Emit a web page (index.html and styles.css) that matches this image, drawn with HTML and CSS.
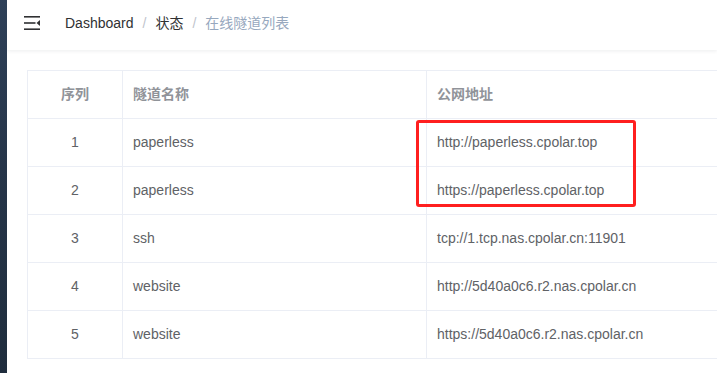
FILE: index.html
```html
<!DOCTYPE html>
<html lang="zh-CN">
<head>
  <meta charset="UTF-8">
  <meta name="viewport" content="width=device-width, initial-scale=1.0">
  <title>在线隧道列表</title>
  <link rel="stylesheet" href="styles.css">
</head>
<body>
  <div class="app">
    <div class="sidebar"></div>

    <div class="main">
      <div class="navbar">
        <div class="hamburger">
          <svg width="16" height="14" viewBox="0 0 16 14">
            <rect x="0" y="0" width="16" height="1.6" fill="#303133"/>
            <rect x="0" y="6.2" width="11.5" height="1.6" fill="#303133"/>
            <polygon points="16,4 12.5,7 16,10" fill="#303133"/>
            <rect x="0" y="12.4" width="16" height="1.6" fill="#303133"/>
          </svg>
        </div>
        <div class="breadcrumb">
          <span class="crumb">Dashboard</span>
          <span class="sep">/</span>
          <span class="crumb">状态</span>
          <span class="sep">/</span>
          <span class="crumb current">在线隧道列表</span>
        </div>
      </div>

      <div class="content">
        <div class="table-wrap">
          <table class="tunnels">
            <thead>
              <tr>
                <th class="col-index">序列</th>
                <th class="col-name">隧道名称</th>
                <th class="col-url">公网地址</th>
              </tr>
            </thead>
            <tbody>
              <tr>
                <td class="col-index">1</td>
                <td>paperless</td>
                <td>http://paperless.cpolar.top</td>
              </tr>
              <tr>
                <td class="col-index">2</td>
                <td>paperless</td>
                <td>https://paperless.cpolar.top</td>
              </tr>
              <tr>
                <td class="col-index">3</td>
                <td>ssh</td>
                <td>tcp://1.tcp.nas.cpolar.cn:11901</td>
              </tr>
              <tr>
                <td class="col-index">4</td>
                <td>website</td>
                <td>http://5d40a0c6.r2.nas.cpolar.cn</td>
              </tr>
              <tr>
                <td class="col-index">5</td>
                <td>website</td>
                <td>https://5d40a0c6.r2.nas.cpolar.cn</td>
              </tr>
            </tbody>
          </table>
          <!-- annotation box drawn over the first two addresses -->
          <div class="highlight"></div>
        </div>
      </div>
    </div>
  </div>
</body>
</html>
```

FILE: styles.css
```css
html, body {
  margin: 0;
  height: 100%;
  overflow: hidden;
}

body {
  font-family: "Liberation Sans", Arial, "Noto Sans CJK SC", sans-serif;
  font-size: 14px;
  color: #606266;
  background: #fff;
}

.app {
  display: flex;
  height: 100%;
}

.sidebar {
  width: 7px;
  flex-shrink: 0;
  background: linear-gradient(to bottom, #2e4058 0%, #263549 45%, #1f2d3d 100%);
}

.main {
  flex: 1;
  min-width: 0;
  overflow: hidden;
}

/* top bar */
.navbar {
  height: 50px;
  display: flex;
  align-items: center;
  background: #fff;
  box-shadow: 0 1px 4px rgba(0, 21, 41, 0.08);
}

.hamburger {
  padding-left: 17px;
  height: 46px;
  display: flex;
  align-items: center;
  margin-top: -4px;
}

.hamburger svg {
  display: block;
}

.breadcrumb {
  display: flex;
  margin-left: 25px;
  line-height: 46px;
  margin-top: -4px;
  white-space: nowrap;
}

.crumb {
  color: #303133;
}

.crumb.current {
  color: #97a8be;
}

.sep {
  margin: 0 9px;
  color: #c0c4cc;
}

/* table */
.content {
  padding: 20px;
}

.table-wrap {
  position: relative;
  width: 1000px;
}

.tunnels {
  width: 100%;
  border-collapse: collapse;
  border: 1px solid #ebeef5;
  table-layout: fixed;
}

.tunnels th,
.tunnels td {
  height: 23px;
  padding: 12px 10px;
  line-height: 23px;
  text-align: left;
  border-bottom: 1px solid #ebeef5;
  border-right: 1px solid #ebeef5;
  white-space: nowrap;
}

.tunnels th {
  color: #909399;
  font-weight: bold;
}

.tunnels .col-index {
  width: 74px;
  text-align: center;
}

.tunnels .col-name {
  width: 283px;
}

.highlight {
  position: absolute;
  left: 389px;
  top: 50px;
  width: 214px;
  height: 81px;
  border: 3px solid #ff1f1f;
  border-radius: 3px;
}
```
